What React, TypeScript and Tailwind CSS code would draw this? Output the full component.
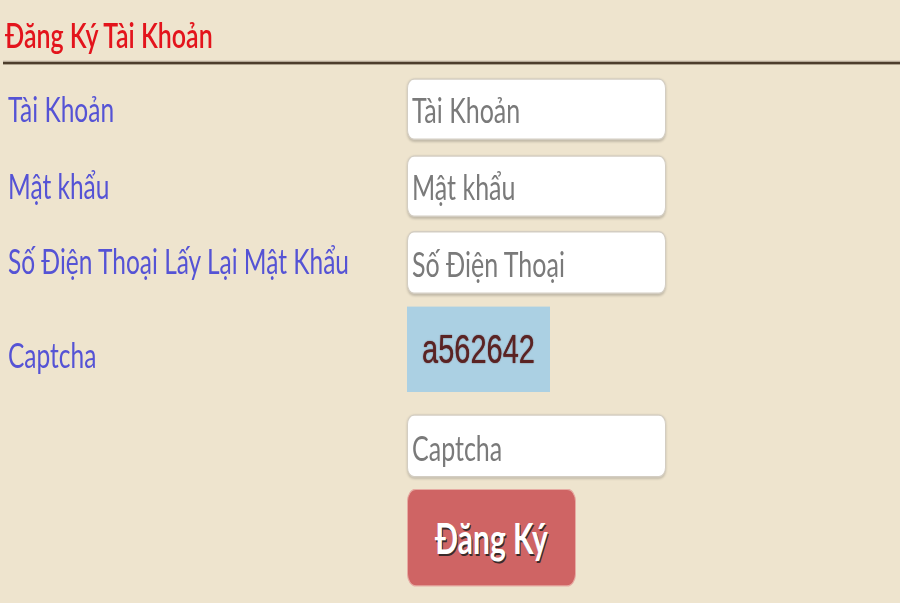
import { useState } from 'react'

const labelCls = "w-[407px] shrink-0 pl-[8px] text-[24.5px] leading-none text-[#5553d5]"
const inputCls =
  "w-[259px] rounded-[7px] border border-[#d3cdc2] bg-white pl-[4px] text-[25px] text-[#555] shadow-[0_1px_2px_rgba(0,0,0,0.18)] outline-none placeholder:text-[#7a7a7a]"

export default function App() {
  const [form, setForm] = useState({ user: '', pass: '', phone: '', captcha: '' })

  return (
    <div className="h-[603px] w-[900px] overflow-hidden bg-[#eee4ce] font-['Lato','Noto_Sans',sans-serif]">
      {/* the page is drawn vertically stretched, like the source capture */}
      <div className="h-[431px] origin-top scale-y-[1.4]">
        {/* Header */}
        <div className="flex h-[43px] items-center pl-[5px] pt-[6px]">
          <h1 className="text-[25px] font-semibold leading-none text-[#e3141c]">Đăng Ký Tài Khoản</h1>
        </div>
        <div className="ml-[3px] h-[3px] border-t border-[#fbf1de] bg-[#4d3d2c]" />

        {/* Form */}
        <div className="flex flex-col pt-[10px]">
          <div className="flex items-center">
            <label className={labelCls}>Tài Khoản</label>
            <input
              className={`${inputCls} h-[44px]`}
              placeholder="Tài Khoản"
              value={form.user}
              onChange={(e) => setForm({ ...form, user: e.target.value })}
            />
          </div>

          <div className="mt-[11px] flex items-center">
            <label className={labelCls}>Mật khẩu</label>
            <input
              type="password"
              className={`${inputCls} h-[44px]`}
              placeholder="Mật khẩu"
              value={form.pass}
              onChange={(e) => setForm({ ...form, pass: e.target.value })}
            />
          </div>

          <div className="mt-[10px] flex items-center">
            <label className={labelCls}>Số Điện Thoại Lấy Lại Mật Khẩu</label>
            <input
              className={`${inputCls} h-[45px]`}
              placeholder="Số Điện Thoại"
              value={form.phone}
              onChange={(e) => setForm({ ...form, phone: e.target.value })}
            />
          </div>

          <div className="mt-[9px] flex items-center">
            <label className={`${labelCls} pt-[9px]`}>Captcha</label>
            <div className="flex h-[61px] w-[143px] items-center justify-center bg-[#abd0e3]">
              <span className="font-['Liberation_Sans',Arial,sans-serif] text-[29px] leading-none text-[#5a2323] [text-shadow:0_0_1px_#5a2323]">
                a562642
              </span>
            </div>
          </div>

          <div className="mt-[16px] flex">
            <div className="w-[407px] shrink-0" />
            <input
              className={`${inputCls} h-[45px]`}
              placeholder="Captcha"
              value={form.captcha}
              onChange={(e) => setForm({ ...form, captcha: e.target.value })}
            />
          </div>

          <div className="mt-[8px] flex">
            <div className="w-[407px] shrink-0" />
            <button className="flex h-[70px] w-[169px] items-center justify-center rounded-[9px] border border-[#e6aba3] bg-[#cf6464] text-[30px] font-bold leading-none text-white [text-shadow:1px_1px_0_#3a2a2a]">
              Đăng Ký
            </button>
          </div>
        </div>
      </div>
    </div>
  )
}
